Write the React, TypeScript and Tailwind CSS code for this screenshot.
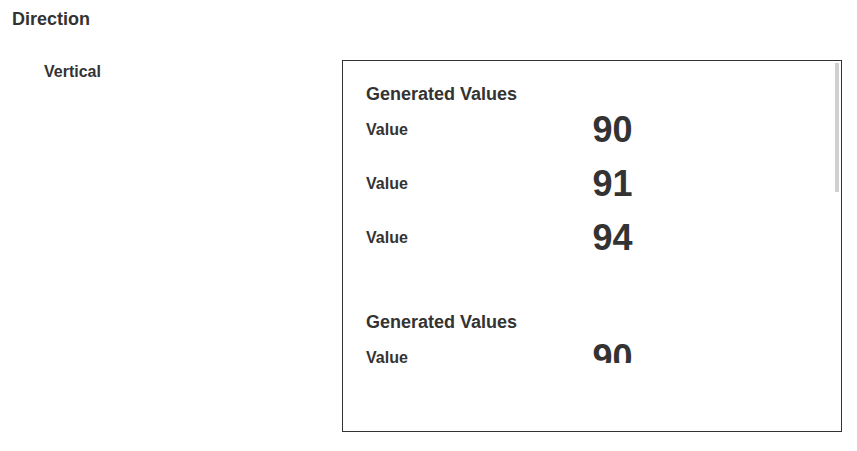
const groups = [
  [90, 91, 94],
  [90, 91, 94],
];

function ValueRow({ value }: { value: number }) {
  return (
    <div className="grid h-[54px] grid-cols-2 items-start">
      <dt className="text-base leading-6">Value</dt>
      <dd className="text-4xl leading-6">{value}</dd>
    </div>
  );
}

function ValueGroup({ values }: { values: number[] }) {
  return (
    <section className="mb-[30px] pr-4">
      <h3 className="mb-3 text-lg leading-6">Generated Values</h3>
      <dl>
        {values.map((value) => (
          <ValueRow key={value} value={value} />
        ))}
      </dl>
    </section>
  );
}

export default function App() {
  return (
    <main className="bg-white pt-[7px] pr-[15px] pb-5 pl-3 font-['Liberation_Sans',Arial,sans-serif] font-bold text-[#333333]">
      <h1 className="text-lg leading-6">Direction</h1>
      <div className="mt-[29px] flex items-start pl-8">
        <h2 className="w-[298px] shrink-0 text-base leading-6">Vertical</h2>
        <div className="flex min-w-0 flex-1 border border-[#333333] pt-[2px] pr-[2px] pb-[68px] pl-[23px]">
          <div className="h-[300px] min-w-0 flex-1 overflow-y-auto pt-[19px] [scrollbar-width:none]">
            {groups.map((values, index) => (
              <ValueGroup key={index} values={values} />
            ))}
          </div>
          <div className="h-[129px] w-1 bg-[#d0d0d0]" />
        </div>
      </div>
    </main>
  );
}
